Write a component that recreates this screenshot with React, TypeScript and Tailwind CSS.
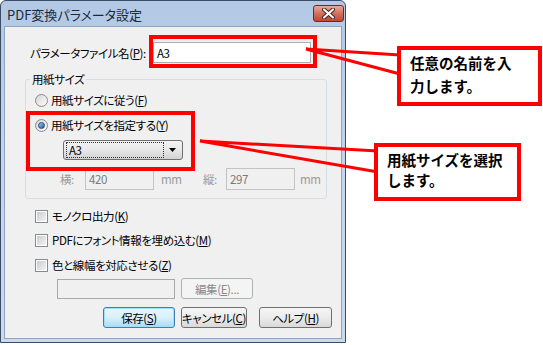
import React from 'react'

const Mn = ({ k }: { k: string }) => (
    <span>(<u>{k}</u>)</span>
)

const Radio = ({ checked }: { checked?: boolean }) => (
    <span className="w-[13px] h-[13px] rounded-full border border-[#8a8a8a] bg-gradient-to-br from-[#d6d6d6] to-[#fcfcfc] flex items-center justify-center shrink-0">
        {checked && <span className="w-[7px] h-[7px] rounded-full border border-[#1f4f86] bg-gradient-to-br from-[#9fd4f6] to-[#1a5699]" />}
    </span>
)

const Check = () => (
    <span className="w-[13px] h-[13px] border border-[#8a8a8a] bg-white flex items-center justify-center shrink-0">
        <span className="w-[9px] h-[9px] bg-gradient-to-br from-[#c8ccd2] to-[#f4f4f4]" />
    </span>
)

const Button = ({ children, primary, disabled, w }: { children: React.ReactNode; primary?: boolean; disabled?: boolean; w: string }) => {
    let cls = 'border-[#707070] bg-gradient-to-b from-[#f4f4f4] via-[#ececec] to-[#d9d9d9] text-black'
    if (primary) cls = 'border-[#3c7fb1] bg-gradient-to-b from-[#eaf6fd] via-[#d9f0fc] to-[#a9dbf6] text-black shadow-[inset_0_0_0_1px_#9fe1f9]'
    if (disabled) cls = 'border-[#adb2b5] bg-[#f4f4f4] text-[#8b8b8b]'
    return (
        <div className={`h-[21px] rounded-[3px] border flex items-center justify-center whitespace-nowrap ${w} ${cls}`}>
            {children}
        </div>
    )
}

const App = () => {
    return (
        <div className="relative w-[543px] h-[345px] bg-white overflow-hidden font-['Noto_Sans_CJK_JP','Noto_Sans',sans-serif] text-[11.5px] leading-[16px] tracking-[-0.4px] text-black whitespace-nowrap [font-feature-settings:'palt']">
            {/* dialog window */}
            <div className="w-[346px] h-[343px] rounded-t-[6px] border border-[#3b4d64] bg-gradient-to-b from-[#b2c8e4] via-[#c3d6ee] to-[#c9daef] flex flex-col">
                <div className="h-[25px] flex items-start pl-[6px] pr-[1px]">
                    <span className="text-[13px] leading-[16px] pt-[6px] tracking-normal text-[#1b2a3c]">PDF変換パラメータ設定</span>
                    <div className="ml-auto mt-[4px] w-[31px] h-[17px] rounded-[3px] border border-[#6b2b24] bg-gradient-to-b from-[#e9a99c] via-[#d2705f] to-[#c2452f] flex items-center justify-center">
                        <svg width="13" height="11" viewBox="0 0 13 11">
                            <path d="M2 1.5 L11 9.5 M11 1.5 L2 9.5" stroke="#4a1a14" strokeWidth="4" strokeLinecap="round" />
                            <path d="M2 1.5 L11 9.5 M11 1.5 L2 9.5" stroke="#ffffff" strokeWidth="2.2" strokeLinecap="round" />
                        </svg>
                    </div>
                </div>

                <div className="flex-1 mx-[3px] mb-[3px] border border-[#8ea4c1] bg-[#f0f0f0] flex flex-col">
                    {/* file name row */}
                    <div className="flex items-center mt-[15px] pl-[25px]">
                        <span className="w-[123px]">パラメータファイル名<Mn k="P" />:</span>
                        <div className="w-[158px] h-[21px] border border-[#abadb3] bg-white flex items-center pl-[3px]">A3</div>
                    </div>

                    {/* paper size group */}
                    <fieldset className="mt-[8px] ml-[20px] w-[302px] border border-[#d5dfe5] rounded-[3px] pb-[8px]">
                        <legend className="ml-[4px] px-[2px]">用紙サイズ</legend>
                        <div className="h-[18px] mt-[4px] flex items-center pl-[9px] gap-[3px]">
                            <Radio />
                            <span>用紙サイズに従う<Mn k="F" /></span>
                        </div>
                        <div className="h-[18px] mt-[7px] flex items-center pl-[9px] gap-[3px]">
                            <Radio checked />
                            <span>用紙サイズを指定する<Mn k="Y" /></span>
                        </div>
                        <div className="mt-[6px] ml-[37px] w-[120px] h-[20px] rounded-[3px] border border-[#707070] bg-gradient-to-b from-[#f3f3f3] via-[#e8e8e8] to-[#d2d2d2] flex items-center px-[2px]">
                            <div className="flex-1 h-[16px] border border-dotted border-[#333] flex items-center pl-[2px]">A3</div>
                            <svg width="14" height="8" viewBox="0 0 14 8" className="ml-[2px]">
                                <path d="M3 2 L10 2 L6.5 6 Z" fill="#000" />
                            </svg>
                        </div>
                        <div className="mt-[8px] flex items-center text-[#9a9a9a]">
                            <span className="ml-[34px] w-[25px]">横:</span>
                            <div className="w-[69px] h-[22px] border border-[#c3c3c3] flex items-center pl-[3px] text-[#7a7a7a]">420</div>
                            <span className="w-[49px] pl-[7px]">mm</span>
                            <span className="w-[23px]">縦:</span>
                            <div className="w-[69px] h-[22px] border border-[#c3c3c3] flex items-center pl-[3px] text-[#7a7a7a]">297</div>
                            <span className="pl-[5px]">mm</span>
                        </div>
                    </fieldset>

                    {/* checkboxes */}
                    <div className="h-[18px] mt-[8px] flex items-center pl-[30px] gap-[4px]">
                        <Check />
                        <span>モノクロ出力<Mn k="K" /></span>
                    </div>
                    <div className="h-[18px] mt-[6px] flex items-center pl-[30px] gap-[4px]">
                        <Check />
                        <span>PDFにフォント情報を埋め込む<Mn k="M" /></span>
                    </div>
                    <div className="h-[18px] mt-[7px] flex items-center pl-[30px] gap-[4px]">
                        <Check />
                        <span>色と線幅を対応させる<Mn k="Z" /></span>
                    </div>

                    <div className="mt-[4px] flex items-center pl-[52px] gap-[6px]">
                        <div className="w-[118px] h-[20px] border border-[#a9a9a9] bg-[#f0f0f0]" />
                        <Button disabled w="w-[72px]"><span>編集<Mn k="E" />...</span></Button>
                    </div>

                    <div className="mt-[8px] flex items-center pl-[98px]">
                        <Button primary w="w-[72px]"><span>保存<Mn k="S" /></span></Button>
                        <div className="w-[6px]" />
                        <Button w="w-[66px]"><span>キャンセル<Mn k="C" /></span></Button>
                        <div className="w-[12px]" />
                        <Button w="w-[73px]"><span>ヘルプ<Mn k="H" /></span></Button>
                    </div>
                </div>
            </div>

            {/* annotation: highlight frames */}
            <div className="absolute left-[149px] top-[35px] w-[168px] h-[33px] border-4 border-[#ff0000]" />
            <div className="absolute left-[26px] top-[111px] w-[169px] h-[60px] border-4 border-[#ff0000]" />

            {/* annotation: pointer lines */}
            <svg className="absolute left-0 top-0 pointer-events-none" width="543" height="345" viewBox="0 0 543 345">
                <polyline points="400,55 306,49 400,74" fill="none" stroke="#ff0000" strokeWidth="3" strokeLinejoin="miter" />
                <polyline points="378,151 200,141 378,172" fill="none" stroke="#ff0000" strokeWidth="3" strokeLinejoin="miter" />
            </svg>

            {/* annotation: callouts */}
            <div className="absolute left-[397px] top-[46px] w-[145px] h-[60px] border-4 border-[#ff0000] bg-white pl-[9px] pt-[1px] text-[14.5px] leading-[23px] tracking-normal font-bold [font-feature-settings:normal]">
                <div>任意の名前を入</div>
                <div>力します。</div>
            </div>
            <div className="absolute left-[374px] top-[143px] w-[147px] h-[58px] border-4 border-[#ff0000] bg-white pl-[9px] pt-[3px] text-[14.5px] leading-[20px] tracking-normal font-bold [font-feature-settings:normal]">
                <div>用紙サイズを選択</div>
                <div>します。</div>
            </div>
        </div>
    )
}

export default App
